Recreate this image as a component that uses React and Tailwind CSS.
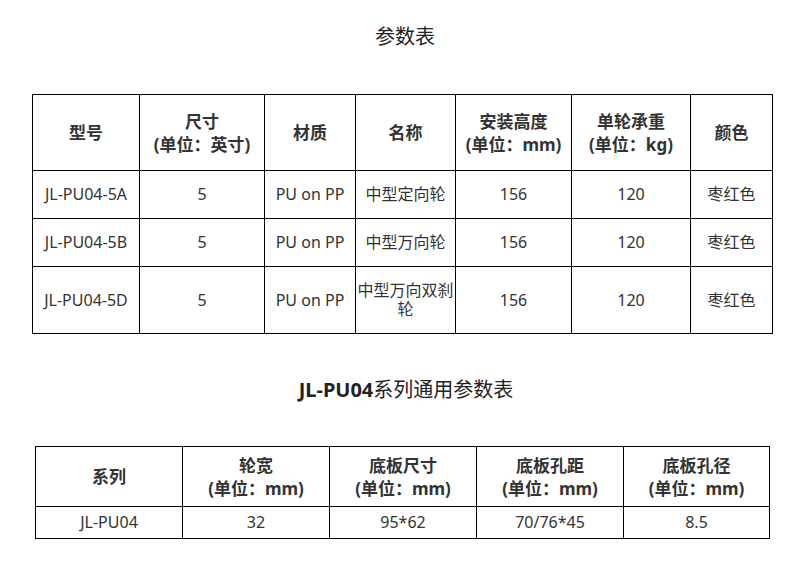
import React from "react";

const font = { fontFamily: '"Noto Sans", "Noto Sans CJK SC", sans-serif' };

const rows1 = [
  ["JL-PU04-5A", "5", "PU on PP", "中型定向轮", "156", "120", "枣红色"],
  ["JL-PU04-5B", "5", "PU on PP", "中型万向轮", "156", "120", "枣红色"],
  ["JL-PU04-5D", "5", "PU on PP", "中型万向双刹轮", "156", "120", "枣红色"],
];

const heads1 = [
  ["型号"],
  ["尺寸", "(单位：英寸)"],
  ["材质"],
  ["名称"],
  ["安装高度", "(单位：mm)"],
  ["单轮承重", "(单位：kg)"],
  ["颜色"],
];

const widths1 = ["w-[107px]", "w-[125px]", "w-[91px]", "w-[100px]", "w-[116px]", "w-[119px]", "w-[82px]"];
const heights1 = ["h-[48px]", "h-[48px]", "h-[67px]"];

const heads2 = [
  ["系列"],
  ["轮宽", "(单位：mm)"],
  ["底板尺寸", "(单位：mm)"],
  ["底板孔距", "(单位：mm)"],
  ["底板孔径", "(单位：mm)"],
];
const row2 = ["JL-PU04", "32", "95*62", "70/76*45", "8.5"];

export default function App() {
  return (
    <div className="w-[796px] h-[574px] bg-white text-[#333]" style={font}>
      <div className="ml-[32px] w-[740px] pt-[24px]">
        <div className="text-center text-[20px] leading-[26px] text-[#222] pl-[6px]">参数表</div>
        <table className="mt-[44px] w-[740px] table-fixed border-collapse border border-black">
          <colgroup>
            {widths1.map((w, i) => (
              <col key={i} className={w} />
            ))}
          </colgroup>
          <thead>
            <tr className="h-[76px]">
              {heads1.map((h, i) => (
                <th key={i} className="border border-black px-0 text-center align-middle text-[17px] font-bold leading-[23px] text-[#333]">
                  {h.map((l, j) => (
                    <div key={j}>{l}</div>
                  ))}
                </th>
              ))}
            </tr>
          </thead>
          <tbody>
            {rows1.map((r, ri) => (
              <tr key={ri} className={heights1[ri]}>
                {r.map((c, ci) => (
                  <td key={ci} className="border border-black px-[1px] text-center align-middle text-[16px] leading-[19px] text-[#333]">
                    {c}
                  </td>
                ))}
              </tr>
            ))}
          </tbody>
        </table>

        <div className="mt-[43px] text-center text-[20px] leading-[26px] text-[#222] pl-[8px]">
          <span className="font-bold">JL-PU04</span>系列通用参数表
        </div>

        <table className="mt-[43px] ml-[3px] w-[734px] table-fixed border-collapse border border-black">
          <colgroup>
            <col className="w-[147px]" />
            <col className="w-[147px]" />
            <col className="w-[147px]" />
            <col className="w-[147px]" />
            <col className="w-[146px]" />
          </colgroup>
          <thead>
            <tr className="h-[60px]">
              {heads2.map((h, i) => (
                <th key={i} className="border border-black px-0 text-center align-middle text-[17px] font-bold leading-[23px] text-[#333]">
                  {h.map((l, j) => (
                    <div key={j}>{l}</div>
                  ))}
                </th>
              ))}
            </tr>
          </thead>
          <tbody>
            <tr className="h-[32px]">
              {row2.map((c, i) => (
                <td key={i} className="border border-black px-[1px] text-center align-middle text-[16px] leading-[19px] text-[#333]">
                  {c}
                </td>
              ))}
            </tr>
          </tbody>
        </table>
      </div>
    </div>
  );
}
